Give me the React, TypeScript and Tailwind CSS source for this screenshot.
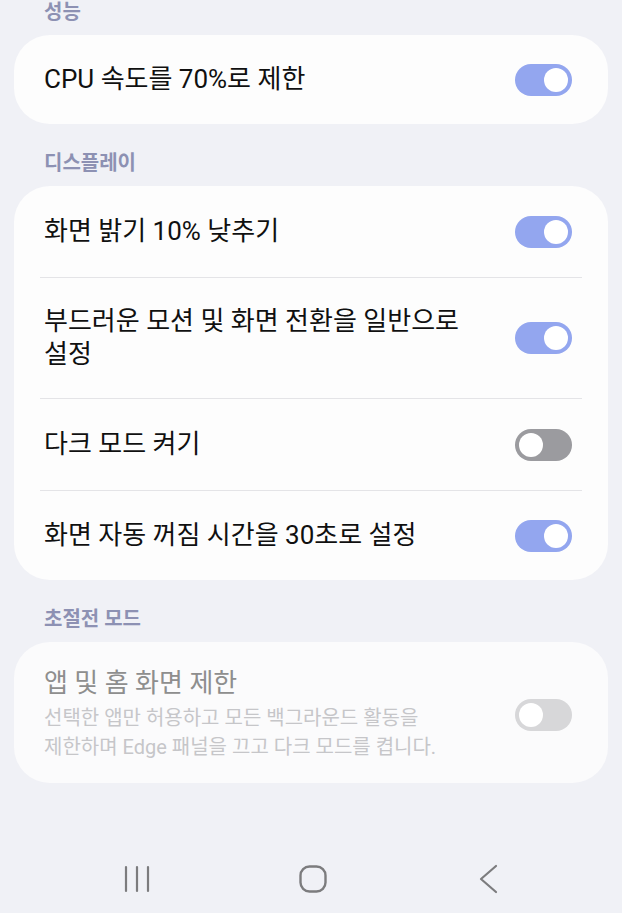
import React from "react";

const FONT = { fontFamily: 'Roboto, "Noto Sans CJK KR", sans-serif' };

function Toggle({ state }: { state: "on" | "off" | "disabled" }) {
  if (state === "on") {
    return (
      <div className="relative shrink-0 w-[57px] h-[32px] rounded-full bg-[#93a6ef]">
        <div className="absolute right-[4px] top-[4px] w-[24px] h-[24px] rounded-full bg-white" />
      </div>
    );
  }
  const track = state === "off" ? "bg-[#9b9b9f]" : "bg-[#d7d7d9]";
  return (
    <div className={`relative shrink-0 w-[57px] h-[32px] rounded-full ${track}`}>
      <div className="absolute left-[4px] top-[4px] w-[24px] h-[24px] rounded-full bg-white" />
    </div>
  );
}

function Header({ children, first }: { children: React.ReactNode; first?: boolean }) {
  return (
    <div
      className={`${first ? "pt-0" : "pt-[27px]"} pb-[11px] pl-[44px] text-[20px] leading-[24px] font-bold text-[#8d91b3]`}
    >
      {children}
    </div>
  );
}

function Row({ text, state, py = "py-[29px]" }: { text: string; state: "on" | "off"; py?: string }) {
  return (
    <div className={`flex items-center pl-[30px] pr-[36px] ${py}`}>
      <div className="flex-1 min-w-0 break-keep text-[26px] leading-[33px] text-[#101010]">{text}</div>
      <div className="ml-[28px]">
        <Toggle state={state} />
      </div>
    </div>
  );
}

function Divider() {
  return <div className="mx-[26px] h-[1px] bg-[#e4e4e7]" />;
}

export default function App() {
  return (
    <div className="w-[622px] min-h-[913px] bg-[#f0f1f6] flex flex-col" style={FONT}>
      <div className="flex flex-col">
        <Header first>성능</Header>
        <div className="mx-[14px] rounded-[36px] bg-[#fdfdfd]">
          <Row text="CPU 속도를 70%로 제한" state="on" py="py-[28px]" />
        </div>

        <Header>디스플레이</Header>
        <div className="mx-[14px] rounded-[36px] bg-[#fdfdfd]">
          <Row text="화면 밝기 10% 낮추기" state="on" />
          <Divider />
          <Row text="부드러운 모션 및 화면 전환을 일반으로 설정" state="on" py="py-[27px]" />
          <Divider />
          <Row text="다크 모드 켜기" state="off" />
          <Divider />
          <Row text="화면 자동 꺼짐 시간을 30초로 설정" state="on" py="py-[28px]" />
        </div>

        <Header>초절전 모드</Header>
        <div className="mx-[14px] rounded-[36px] bg-[#fbfbfc] flex items-center pl-[30px] pr-[36px] pt-[25px] pb-[21px]">
          <div className="flex-1 min-w-0 break-keep">
            <div className="text-[26px] leading-[33px] text-[#8e8e8e]">앱 및 홈 화면 제한</div>
            <div className="mt-[4px] text-[20px] leading-[29px] text-[#c6c6c9]">
              선택한 앱만 허용하고 모든 백그라운드 활동을 제한하며 Edge 패널을 끄고 다크 모드를 켭니다.
            </div>
          </div>
          <div className="ml-[28px]">
            <Toggle state="disabled" />
          </div>
        </div>
      </div>

      <div className="mt-auto h-[68px] flex items-center justify-center pl-[4px]">
        <div className="w-[176px] flex justify-center">
          <svg width="28" height="28" viewBox="0 0 28 28" fill="none" stroke="#7c7c7e" strokeWidth="2.2" strokeLinecap="round">
            <line x1="3" y1="2" x2="3" y2="26" />
            <line x1="14" y1="2" x2="14" y2="26" />
            <line x1="25" y1="2" x2="25" y2="26" />
          </svg>
        </div>
        <div className="w-[176px] flex justify-center">
          <svg width="28" height="28" viewBox="0 0 28 28" fill="none" stroke="#7c7c7e" strokeWidth="2.4">
            <rect x="1.5" y="1.5" width="25" height="25" rx="9" />
          </svg>
        </div>
        <div className="w-[176px] flex justify-center">
          <svg width="20" height="30" viewBox="0 0 20 30" fill="none" stroke="#7c7c7e" strokeWidth="2.2" strokeLinecap="round" strokeLinejoin="round">
            <polyline points="17,2 2,15 17,28" />
          </svg>
        </div>
      </div>
    </div>
  );
}
